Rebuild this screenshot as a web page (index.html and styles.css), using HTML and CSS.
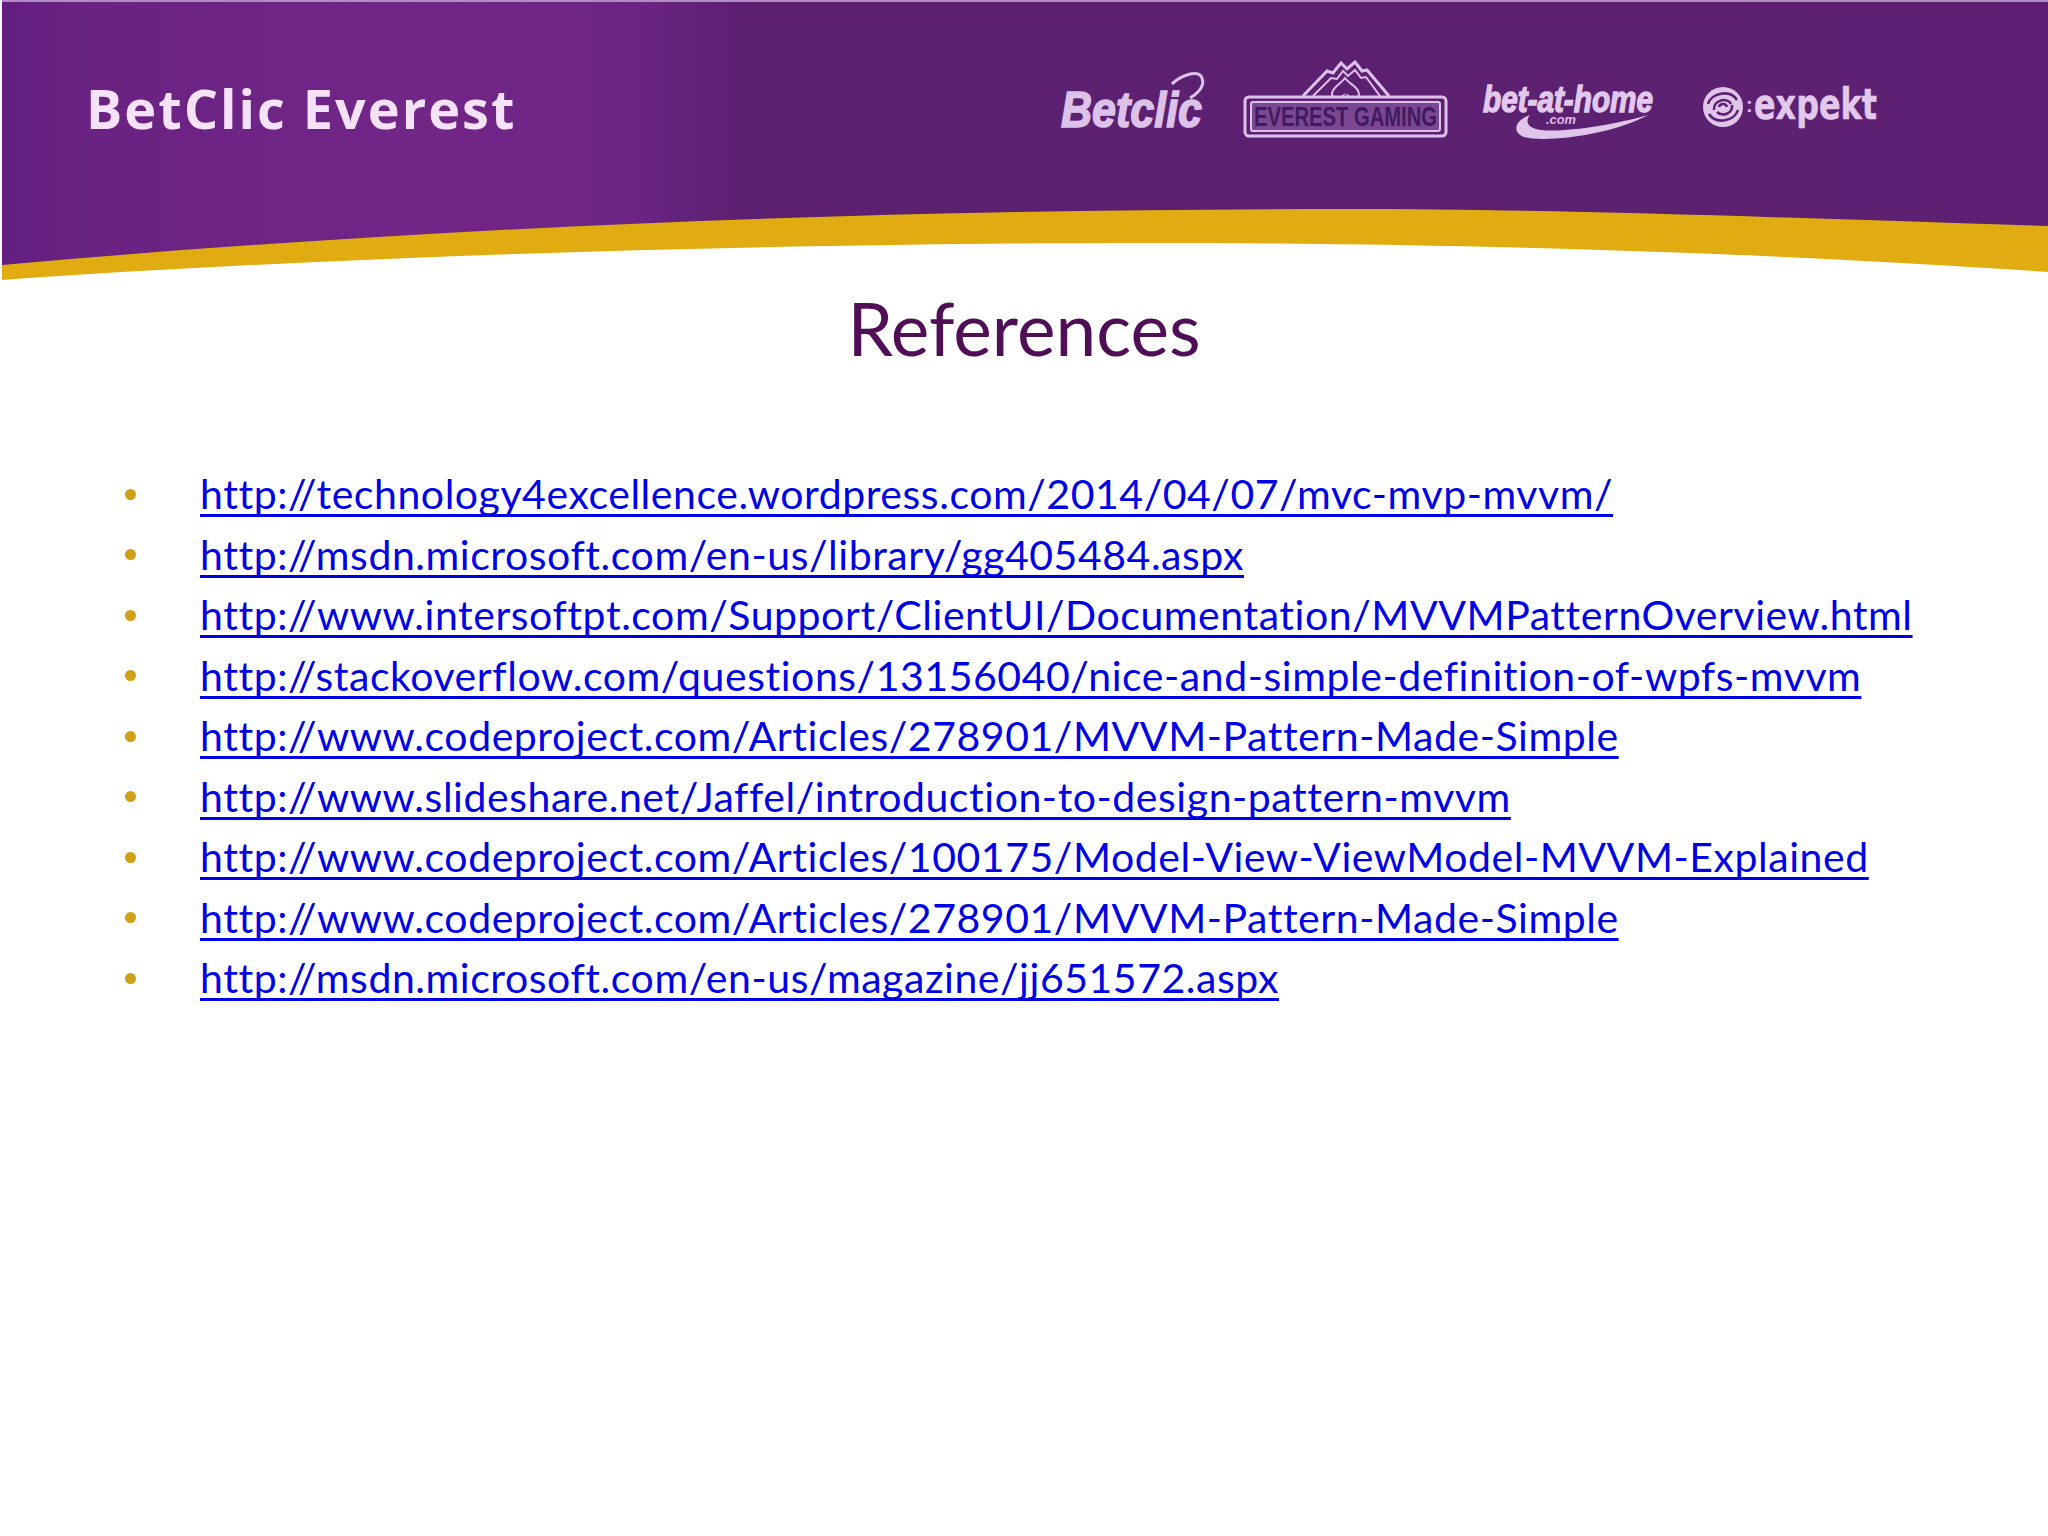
FILE: index.html
```html
<!DOCTYPE html>
<html lang="en">
<head>
<meta charset="utf-8">
<title>References</title>
<link rel="stylesheet" href="styles.css">
</head>
<body>
<main class="slide">
  <header class="banner">
    <svg class="banner-bg" viewBox="0 0 2048 282" preserveAspectRatio="none" aria-hidden="true">
      <defs>
        <linearGradient id="purple" x1="0" y1="0" x2="1" y2="0">
          <stop offset="0" stop-color="#621f7f"/>
          <stop offset="0.05" stop-color="#6a2383"/>
          <stop offset="0.2" stop-color="#722687"/>
          <stop offset="0.3" stop-color="#6d2585"/>
          <stop offset="0.36" stop-color="#5c2071"/>
          <stop offset="1" stop-color="#5d2072"/>
        </linearGradient>
      </defs>
      <path fill="#e0ac12" d="M2 200 L2 280 C350 255 800 243 1150 243 C1500 243 1800 255 2048 272 V200 Z"/>
      <path fill="url(#purple)" d="M2 2 H2048 V226 C1800 218 1550 209 1350 209 C900 209 450 225 2 265 Z"/>
      <rect x="2" y="0" width="2046" height="2" fill="#b18cc2"/>
    </svg>
    <div class="brand">BetClic Everest</div>
    <div class="logos">
      <svg class="logo logo-betclic" viewBox="1060 50 147 95" aria-label="Betclic">
        <text class="betclic-text" x="1061" y="127" textLength="141" lengthAdjust="spacingAndGlyphs">Betclic</text>
        <path class="logo-line" d="M1172 84 C1180 76 1196 70 1201 76 C1206 84 1200 92 1190 98"/>
      </svg>
      <svg class="logo logo-everest" viewBox="1244 50 204 95" aria-label="Everest Gaming">
        <path class="logo-line" d="M1303 96 L1327 71 L1333 73 L1341 63 L1347 69 L1355 62 L1362 71 L1367 70 L1389 96"/>
        <path class="logo-line thin" d="M1313 96 L1331 78 L1337 79 L1343 71 L1348 76 L1355 70 L1361 78 L1366 77 L1380 96"/>
        <path class="logo-line thin" d="M1345 78 C1341 84 1332 87 1332 94 C1332 99 1339 99 1343 96 L1341 101 H1350 L1348 96 C1352 99 1359 99 1359 94 C1359 87 1349 84 1345 78 Z"/>
        <rect class="ev-outer" x="1245" y="97" width="201" height="39" rx="4"/>
        <rect class="ev-inner" x="1251" y="102" width="189" height="29" rx="2"/>
        <text class="ev-text" x="1254" y="126" textLength="183" lengthAdjust="spacingAndGlyphs">EVEREST GAMING</text>
      </svg>
      <svg class="logo logo-home" viewBox="1482 50 175 95" aria-label="bet-at-home.com">
        <text class="home-text" x="1483" y="112" textLength="170" lengthAdjust="spacingAndGlyphs">bet-at-home</text>
        <text class="home-com" x="1546" y="124" textLength="30" lengthAdjust="spacingAndGlyphs">.com</text>
        <path class="logo-fill" d="M1530 115 C1514 121 1512 132 1524 137 C1545 143 1612 135 1648 115 C1610 126 1555 134 1536 129 C1526 126 1526 120 1530 115 Z"/>
      </svg>
      <svg class="logo logo-expekt" viewBox="1704 50 174 95" aria-label="expekt">
        <circle class="logo-fill" cx="1723" cy="107" r="20"/>
        <path class="swirl" d="M1708 104 C1711 93 1730 89 1737 100 M1738 110 C1735 121 1716 125 1709 114 M1714 110 C1713 100 1727 97 1731 104 M1732 105 C1733 114 1722 117 1717 112 M1719 107 C1720 103 1726 103 1727 107"/>
        <text class="expekt-dash" x="1746" y="112">:</text>
        <text class="expekt-text" x="1754" y="119" textLength="123" lengthAdjust="spacingAndGlyphs">expekt</text>
      </svg>
    </div>
  </header>

  <h1 class="title">References</h1>

  <ul class="refs">
    <li><a href="#">http://technology4excellence.wordpress.com/2014/04/07/mvc-mvp-mvvm/</a></li>
    <li><a href="#">http://msdn.microsoft.com/en-us/library/gg405484.aspx</a></li>
    <li><a href="#">http://www.intersoftpt.com/Support/ClientUI/Documentation/MVVMPatternOverview.html</a></li>
    <li><a href="#">http://stackoverflow.com/questions/13156040/nice-and-simple-definition-of-wpfs-mvvm</a></li>
    <li><a href="#">http://www.codeproject.com/Articles/278901/MVVM-Pattern-Made-Simple</a></li>
    <li><a href="#">http://www.slideshare.net/Jaffel/introduction-to-design-pattern-mvvm</a></li>
    <li><a href="#">http://www.codeproject.com/Articles/100175/Model-View-ViewModel-MVVM-Explained</a></li>
    <li><a href="#">http://www.codeproject.com/Articles/278901/MVVM-Pattern-Made-Simple</a></li>
    <li><a href="#">http://msdn.microsoft.com/en-us/magazine/jj651572.aspx</a></li>
  </ul>
</main>
</body>
</html>
```
FILE: styles.css
```css
html, body {
  margin: 0;
  padding: 0;
  background: #ffffff;
}

.slide {
  width: 2048px;
  height: 1536px;
  overflow: hidden;
  font-family: "Lato", "Liberation Sans", sans-serif;
  font-variant-ligatures: none;
}

.banner {
  position: relative;
  height: 282px;
  display: flex;
  align-items: flex-start;
  padding: 50px 170px 0 86px;
  box-sizing: border-box;
}

.banner-bg {
  position: absolute;
  inset: 0;
  width: 100%;
  height: 100%;
}

.brand {
  position: relative;
  font-family: "Open Sans", "Liberation Sans", sans-serif;
  font-weight: 700;
  font-size: 54px;
  line-height: 60px;
  letter-spacing: 2px;
  color: #f6e2f8;
  white-space: nowrap;
  margin-top: 28px;
}

.logos {
  position: relative;
  display: flex;
  margin-left: auto;
}

.logo {
  display: block;
  height: 95px;
  overflow: visible;
}

.logo-betclic { width: 147px; }
.logo-everest { width: 204px; margin-left: 37px; }
.logo-home { width: 175px; margin-left: 34px; }
.logo-expekt { width: 174px; margin-left: 47px; }

.logo-line {
  fill: none;
  stroke: #dcc2e8;
  stroke-width: 3;
}

.logo-line.thin {
  stroke-width: 2;
}

.logo-fill {
  fill: #dfc5ea;
}

.betclic-text {
  font-family: "Liberation Sans", sans-serif;
  font-weight: 700;
  font-style: italic;
  font-size: 50px;
  fill: #dcc2e8;
  stroke: #dcc2e8;
  stroke-width: 1.6;
}

.ev-outer {
  fill: #5d2072;
  stroke: #dcc2e8;
  stroke-width: 3;
}

.ev-inner {
  fill: #7a4792;
  stroke: #dcc2e8;
  stroke-width: 2;
}

.ev-text {
  font-family: "Liberation Sans", sans-serif;
  font-weight: 700;
  font-size: 27px;
  fill: #421a5f;
}

.home-text {
  font-family: "Liberation Sans", sans-serif;
  font-weight: 700;
  font-style: italic;
  font-size: 37px;
  fill: #e2c8ec;
  stroke: #e2c8ec;
  stroke-width: 1.4;
}

.home-com {
  font-family: "Liberation Sans", sans-serif;
  font-weight: 700;
  font-style: italic;
  font-size: 13px;
  fill: #d9bce6;
}

.swirl {
  fill: none;
  stroke: #5d2072;
  stroke-width: 2.6;
}

.expekt-dash {
  font-family: "Liberation Sans", sans-serif;
  font-weight: 700;
  font-size: 20px;
  fill: #d9bce6;
}

.expekt-text {
  font-family: "DejaVu Sans", sans-serif;
  font-weight: 700;
  font-size: 42px;
  fill: #e2c8ec;
  stroke: #e2c8ec;
  stroke-width: 0.6;
}

.title {
  margin: 0;
  padding-top: 6px;
  text-align: center;
  font-weight: 400;
  font-size: 73px;
  line-height: 80px;
  color: #4f0e56;
}

.refs {
  list-style: none;
  margin: 0;
  padding: 96px 0 0 125px;
}

.refs li {
  display: flex;
  align-items: center;
  height: 60.5px;
  white-space: nowrap;
}

.refs li::before {
  content: "";
  flex: none;
  width: 11px;
  height: 11px;
  border-radius: 50%;
  background: #cf9f14;
  margin-right: 64px;
}

.refs a {
  font-size: 41px;
  line-height: 60px;
  letter-spacing: 0.55px;
  color: #0000e6;
  text-decoration: underline;
  text-decoration-thickness: 3px;
  text-underline-offset: 5px;
  text-decoration-skip-ink: none;
}
```
